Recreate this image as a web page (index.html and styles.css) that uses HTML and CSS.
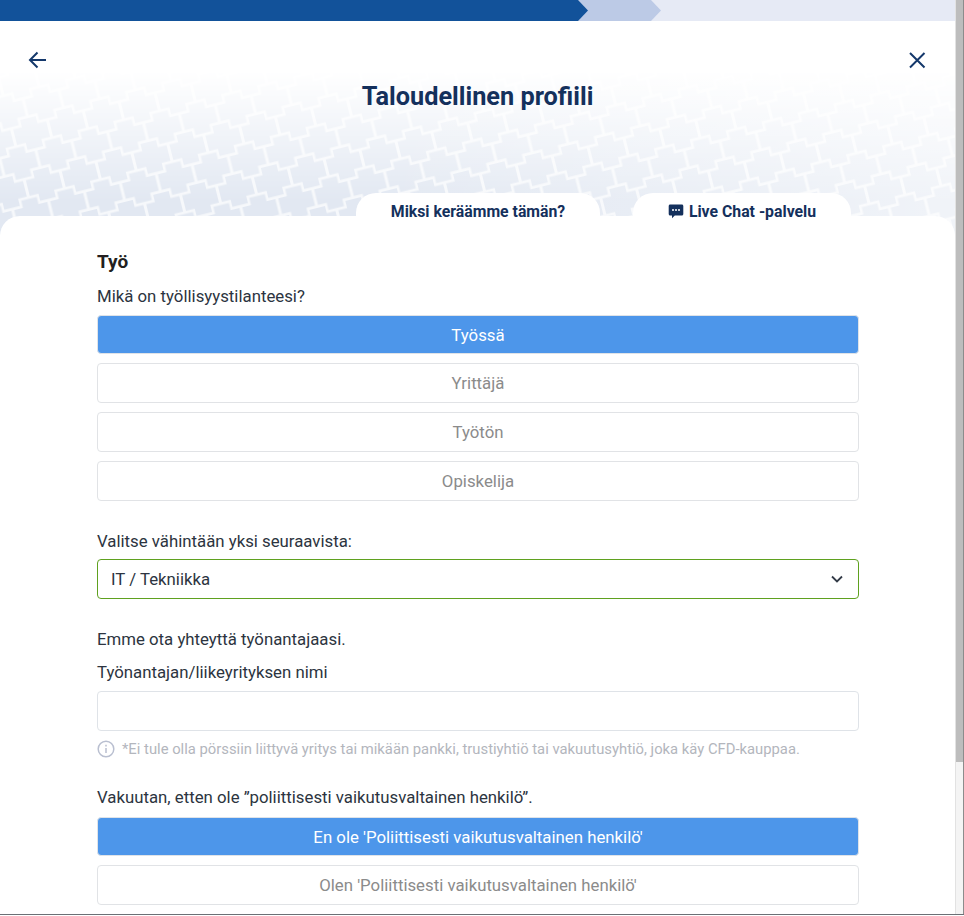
FILE: index.html
```html
<!DOCTYPE html>
<html lang="fi">
<head>
    <meta charset="UTF-8">
    <meta name="viewport" content="width=device-width, initial-scale=1.0">
    <title>Taloudellinen profiili</title>
    <link rel="stylesheet" href="styles.css">
</head>
<body>
    <div class="window">
        <div class="app">
            <div class="progress">
                <div class="step-next">
                    <div class="step-done"></div>
                </div>
            </div>

            <header class="head">
                <svg class="pattern" width="955" height="225" aria-hidden="true">
                    <defs>
                        <path id="cross" d="M-8-15.500H8V-8H17V8H8V15.500H-8V8H-17V-8H-8z" fill="#e2e8f2"/>
                        <pattern id="crosses" width="37" height="52.400" patternUnits="userSpaceOnUse" patternTransform="translate(20 142) rotate(-14) translate(-18.500 -13)">
                            <rect width="37" height="52.400" fill="#f6f8fb"/>
                            <use href="#cross" x="18.500" y="13"/>
                            <use href="#cross" x="18.500" y="65.400"/>
                            <use href="#cross" x="0" y="39.200"/>
                            <use href="#cross" x="37" y="39.200"/>
                            <use href="#cross" x="0" y="-13.200"/>
                            <use href="#cross" x="37" y="-13.200"/>
                        </pattern>
                        <linearGradient id="fade" x1="0" y1="0" x2="0" y2="1">
                            <stop offset="0.22" stop-color="#000"/>
                            <stop offset="0.8" stop-color="#fff"/>
                        </linearGradient>
                        <linearGradient id="wash" x1="0" y1="0" x2="1" y2="0">
                            <stop offset="0.4" stop-color="#fff" stop-opacity="0"/>
                            <stop offset="1" stop-color="#fff" stop-opacity="0.5"/>
                        </linearGradient>
                        <mask id="fade-mask">
                            <rect width="955" height="225" fill="url(#fade)"/>
                        </mask>
                    </defs>
                    <rect width="955" height="225" fill="url(#crosses)" mask="url(#fade-mask)"/>
                    <rect width="955" height="225" fill="url(#wash)"/>
                </svg>
                <div class="head-top">
                    <svg class="nav-icon" width="20" height="20" viewBox="0 0 20 20"><path d="M18 10H2.500M9.500 2.500 2 10l7.500 7.500"/></svg>
                    <svg class="nav-icon" width="20" height="20" viewBox="0 0 20 20"><path d="M3 3l14.500 14.500M17.500 3 3 17.500"/></svg>
                </div>
                <h1>Taloudellinen profiili</h1>
                <div class="tabs">
                    <div class="tab tab-why">Miksi keräämme tämän?</div>
                    <div class="tab tab-chat">
                        <svg width="16" height="16" viewBox="0 0 16 16"><path class="bubble" d="M2.200 1.500h11.600c.9 0 1.500.6 1.500 1.500v8c0 .9-.6 1.500-1.500 1.500H6.800L4 15.300v-2.800H2.200c-.9 0-1.500-.6-1.500-1.500V3c0-.9.6-1.500 1.500-1.500z"/><circle cx="5" cy="7" r="1" fill="#fff"/><circle cx="8" cy="7" r="1" fill="#fff"/><circle cx="11" cy="7" r="1" fill="#fff"/></svg>
                        Live Chat -palvelu
                    </div>
                </div>
            </header>

            <main class="sheet">
                <h2>Työ</h2>
                <p class="label first">Mikä on työllisyystilanteesi?</p>
                <div class="options">
                    <div class="option selected">Työssä</div>
                    <div class="option">Yrittäjä</div>
                    <div class="option">Työtön</div>
                    <div class="option">Opiskelija</div>
                </div>

                <p class="label gap-select">Valitse vähintään yksi seuraavista:</p>
                <div class="select">
                    IT / Tekniikka
                    <svg width="14" height="14" viewBox="0 0 14 14"><path d="M2 4.500 7 9.500l5-5"/></svg>
                </div>

                <p class="label gap-employer">Emme ota yhteyttä työnantajaasi.</p>
                <p class="label gap-name">Työnantajan/liikeyrityksen nimi</p>
                <div class="input"></div>
                <p class="note">
                    <svg width="18" height="18" viewBox="0 0 18 18"><circle cx="9" cy="9" r="7.800"/><path d="M9 8v5M9 4.800v1.600"/></svg>
                    *Ei tule olla pörssiin liittyvä yritys tai mikään pankki, trustiyhtiö tai vakuutusyhtiö, joka käy CFD-kauppaa.
                </p>

                <p class="label gap-pep">Vakuutan, etten ole ”poliittisesti vaikutusvaltainen henkilö”.</p>
                <div class="options">
                    <div class="option selected">En ole 'Poliittisesti vaikutusvaltainen henkilö'</div>
                    <div class="option">Olen 'Poliittisesti vaikutusvaltainen henkilö'</div>
                </div>
            </main>
        </div>
        <div class="scrollbar"><div class="thumb"></div></div>
    </div>
</body>
</html>
```
FILE: styles.css
```css
html, body { margin: 0; height: 916px; overflow: hidden; background: #fff; }
body { font-family: Roboto, "Liberation Sans", sans-serif; font-size: 16.800px; color: #2c3440; }

.window { display: flex; height: 914px; border-bottom: 1px solid #6b6f75; overflow: hidden; }
.app { width: 955px; flex: none; display: flex; flex-direction: column; }

.scrollbar { flex: 1; background: #f4f4f4; border-left: 1px solid #e2e2e2; border-right: 1px solid #8c8c8c; }
.thumb { height: 762px; background: #bdbdbd; }

/* progress */
.progress { height: 21px; flex: none; background: #e6eaf5; }
.step-next { width: 661px; height: 21px; background: #bccae6; clip-path: polygon(0 0, 651px 0, 100% 50%, 651px 100%, 0 100%); }
.step-done { width: 588px; height: 21px; background: #12529a; clip-path: polygon(0 0, 578px 0, 100% 50%, 578px 100%, 0 100%); }

/* header */
.head { height: 195px; flex: none; position: relative; display: flex; flex-direction: column; align-items: center; }
.pattern { position: absolute; left: 0; top: 0; }
.head-top { position: relative; align-self: stretch; display: flex; justify-content: space-between; padding: 29px 28px 0; }
.nav-icon { fill: none; stroke: #14386b; stroke-width: 2; }
h1 { position: relative; margin: 10px 0 0; font-size: 25.300px; line-height: 34px; font-weight: 700; color: #14305c; }

.tabs { position: relative; z-index: 1; margin-top: auto; align-self: flex-start; display: flex; margin-left: 356px; gap: 33px; }
.tab { height: 23px; box-sizing: border-box; padding-top: 13px; display: flex; align-items: center; justify-content: center; gap: 5px;
    background: #fff; border-radius: 20px 20px 0 0; font-size: 15.800px; font-weight: 700; color: #14305c; }
.tab-why { width: 244px; }
.tab-chat { width: 218px; }
.bubble { fill: #14305c; }

/* form */
.sheet { flex: 1; background: #fff; border-radius: 20px 20px 0 0; padding: 34px 96px 0 97px; position: relative; }
h2 { margin: 0; font-size: 19px; line-height: 24px; font-weight: 700; color: #231f20; }
.label { margin: 0; line-height: 24px; }
.first { margin-top: 10px; margin-bottom: 7px; }
.gap-select { margin-top: 28px; margin-bottom: 6px; }
.gap-employer { margin-top: 28px; }
.gap-name { margin-top: 9px; margin-bottom: 7px; }
.gap-pep { margin-top: 26px; margin-bottom: 8px; }

.options { display: flex; flex-direction: column; gap: 9px; }
.option { height: 40px; box-sizing: border-box; border: 1px solid #e1e3e6; border-radius: 4px; display: flex; align-items: center; justify-content: center; color: #8b8b8b; background: #fff; }
.option.selected { background: #4d96ea; border-color: #dfe3e8; color: #fff; height: 39px; }

.select { height: 40px; box-sizing: border-box; border: 1px solid #5fa11f; border-radius: 4px; display: flex; align-items: center; justify-content: space-between; padding: 0 14px 0 13px; }
.select svg { fill: none; stroke: #333b47; stroke-width: 1.800; }

.input { height: 40px; box-sizing: border-box; border: 1px solid #dfe3e8; border-radius: 4px; }

.note { margin: 8px 0 0; display: flex; align-items: center; gap: 7px; font-size: 14.800px; line-height: 20px; color: #b3b6bd; white-space: nowrap; }
.note svg { flex: none; fill: none; stroke: #b9bfd0; stroke-width: 1.500; }
```
